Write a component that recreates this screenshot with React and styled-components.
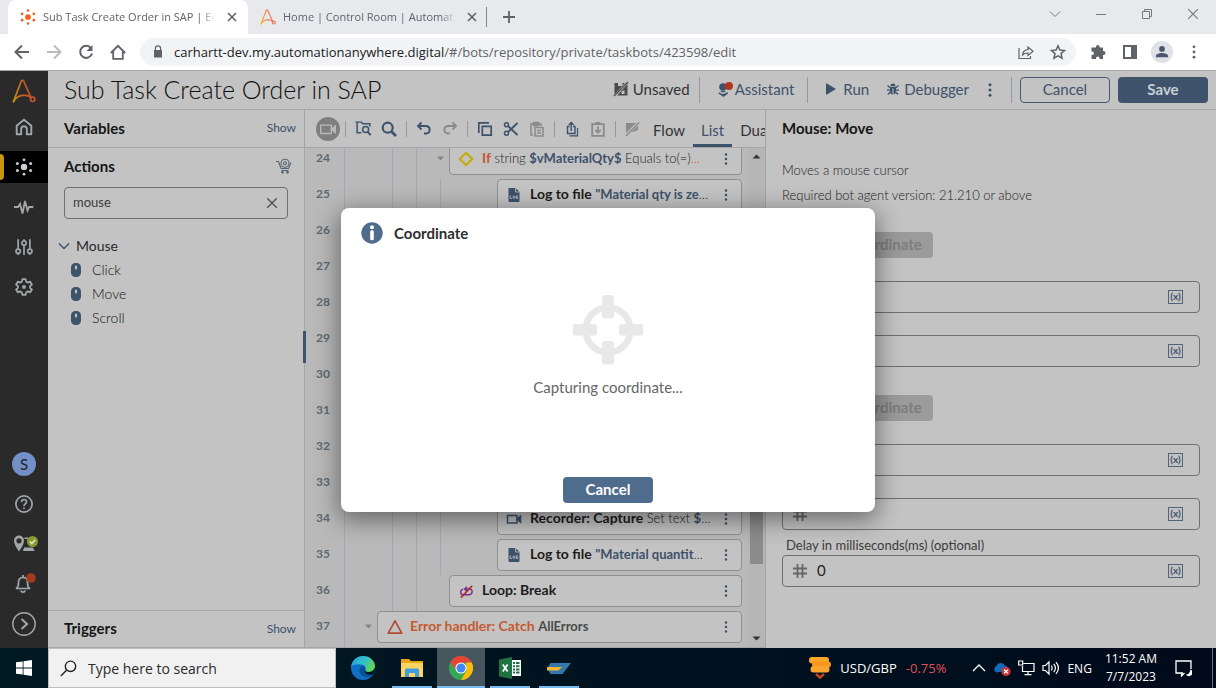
import React from "react";
import styled, { createGlobalStyle } from "styled-components";

const ui = '"Lato", "Open Sans", sans-serif';
const sys = '"Open Sans", "Noto Sans", sans-serif';

const c = {
  panel: "#c3c3c3",
  canvas: "#b9b9b9",
  line: "#a4a5a7",
  guide: "#a5a9af",
  blue: "#3d526b",
  ink: "#1c1c1c",
  off: "#8b8b8b",
  chrome: "#5f6368",
};

const GlobalStyle = createGlobalStyle`
  *, *::before, *::after { box-sizing: border-box; }
  html, body, #root { height: 100%; }
  body { margin: 0; overflow: hidden; font-family: ${ui}; font-size: 14px; color: ${c.ink}; }
  button, input { font: inherit; color: inherit; }
  button { padding: 0; border: 0; background: none; }
  h1, h2, p, ul, ol { margin: 0; padding: 0; font-weight: inherit; font-size: inherit; list-style: none; }
  a { color: inherit; text-decoration: none; }
  svg { display: block; flex: none; }
`;

const Screen = styled.div`
  display: flex;
  flex-direction: column;
  height: 100%;
`;

/* ---------- icons ---------- */

const Svg = ({ s = 16, vb = 16, w = 1.5, fill = "none", children }) => (
  <svg
    width={s}
    height={s}
    viewBox={`0 0 ${vb} ${vb}`}
    fill={fill}
    stroke={fill === "none" ? "currentColor" : "none"}
    strokeWidth={w}
    aria-hidden="true"
  >
    {children}
  </svg>
);

const Logo = ({ s = 24, id, from, to }) => (
  <svg width={s} height={s} viewBox="0 0 24 24" fill="none" aria-hidden="true">
    <defs>
      <linearGradient id={id} x1="0" y1="0" x2="24" y2="0" gradientUnits="userSpaceOnUse">
        <stop offset="0" stopColor={from} />
        <stop offset="0.5" stopColor={to} />
      </linearGradient>
    </defs>
    <g stroke={`url(#${id})`} strokeWidth="1.7" strokeLinecap="round">
      <path d="M1.5 22.5L9.3 2.2Q10.5 0 11.7 2.2L18.8 18.2" />
      <path d="M1.5 22.5Q5.5 16.3 12 16.2Q16.5 16.4 19 18.6" />
      <circle cx="20.7" cy="20.3" r="2.2" />
    </g>
  </svg>
);

const Hub = ({ s = 18 }) => (
  <Svg s={s} vb={18} fill="currentColor">
    <circle cx="9" cy="9" r="3.2" />
    <circle cx="9" cy="1.8" r="1.4" />
    <circle cx="9" cy="16.2" r="1.4" />
    <circle cx="2.4" cy="5.4" r="1.5" />
    <circle cx="15.6" cy="5.4" r="1.5" />
    <circle cx="2.4" cy="12.6" r="1.5" />
    <circle cx="15.6" cy="12.6" r="1.5" />
  </Svg>
);

const Cross = ({ s = 10, w = 1.5 }) => (
  <Svg s={s} vb={10} w={w}><path d="M1 1l8 8M9 1l-8 8" /></Svg>
);

const Dots = ({ s = 16, r = 1.4 }) => (
  <Svg s={s} fill="currentColor">
    <circle cx="8" cy="2.8" r={r} /><circle cx="8" cy="8" r={r} /><circle cx="8" cy="13.2" r={r} />
  </Svg>
);

const Caret = () => (
  <Svg s={9} vb={9} fill="currentColor"><path d="M1 2.5h7L4.5 6.5z" /></Svg>
);

const MouseIcon = () => (
  <svg width="10" height="14" viewBox="0 0 10 14" aria-hidden="true">
    <rect width="10" height="14" rx="4.5" fill={c.blue} />
    <rect x="4" y="2.5" width="2" height="4" rx="1" fill={c.panel} />
  </svg>
);

const FileLog = () => (
  <svg width="14" height="16" viewBox="0 0 14 16" aria-hidden="true">
    <path d="M2 1h6.5l4 4v9a1 1 0 0 1-1 1h-9a1 1 0 0 1-1-1V1.5z" fill={c.blue} />
    <path d="M8.5 1v4h4" fill="none" stroke={c.panel} strokeWidth=".8" />
    <path d="M3.2 8.5v3h1.6M10.9 8.9h-1.5v2.6h1.5v-1.2" fill="none" stroke={c.panel} strokeWidth=".9" />
    <circle cx="7" cy="10.2" r="1.1" fill="none" stroke={c.panel} strokeWidth=".9" />
  </svg>
);

const CameraIcon = ({ s = 16, w = 1.5 }) => (
  <Svg s={s} w={w}>
    <path d="M1.5 4.5h9.5v7.5H1.5z" />
    <path d="M11 8.2l3.5-3v6z" fill="currentColor" />
  </Svg>
);

const DiamondIcon = () => (
  <Svg w={2}><path d="M8 1.8L14.2 8 8 14.2 1.8 8z" /></Svg>
);

const LoopBreakIcon = () => (
  <Svg s={15} w={1.5}>
    <path d="M4.5 5.5C1 6 1 11.5 4.5 11.5h6c4.5-.3 4.5-6 1-6.2H7M8.5 3L6 5.3l2.5 2.4" />
    <path d="M2 14.5L14 2" stroke="#a9332f" strokeWidth="1.8" />
  </Svg>
);

const ErrorIcon = () => (
  <Svg s={18} w={1.5}><path d="M8 2.5L14 13.5H2z" strokeLinejoin="round" /></Svg>
);

const HashIcon = () => (
  <Svg s={14} vb={14} w={1.8}><path d="M4.5 0v14M9.5 0v14M0 4.5h14M0 9.5h14" /></Svg>
);

/* ---------- browser window ---------- */

const IconButton = styled.button`
  display: grid;
  place-items: center;
  flex: none;
  width: ${(p) => p.$w || 26}px;
  height: ${(p) => p.$h || 28}px;
  color: ${(p) => p.$color || "inherit"};
`;

const TabStrip = styled.div`
  display: flex;
  align-items: stretch;
  flex: none;
  height: 34px;
  padding-left: 8px;
  background: #e8e9ed;
  font-family: ${sys};
  font-size: 11px;
  color: ${c.chrome};
`;

const Tab = styled.div`
  display: flex;
  align-items: center;
  width: 240px;
  padding: 0 6px 0 12px;
  gap: 7px;
  border-radius: 8px 8px 0 0;
  background: ${(p) => (p.$active ? "#fff" : "transparent")};
`;

const TabTitle = styled.span`
  flex: 1;
  padding-bottom: 1px;
  overflow: hidden;
  white-space: nowrap;
  mask-image: linear-gradient(90deg, #000 92%, transparent);
`;

const Tint = styled.span`
  color: ${(p) => p.$color};
`;

const StripRule = styled.span`
  width: 1px;
  height: 20px;
  margin: 7px 9px 0 -2px;
  background: #85878b;
`;

const WindowControls = styled.div`
  display: flex;
  margin-left: auto;
  color: #77797c;
`;

const AddressBar = styled.div`
  display: flex;
  align-items: center;
  flex: none;
  height: 36px;
  padding: 0 6px;
  background: #fff;
  color: ${c.chrome};
`;

const UrlPill = styled.div`
  display: flex;
  align-items: center;
  flex: 1;
  height: 28px;
  margin: 0 6px;
  padding: 0 2px 0 10px;
  border-radius: 14px;
  background: #f1f3f4;
  font-family: ${sys};
  font-size: 13px;
`;

const UrlText = styled.span`
  flex: 1;
  padding-left: 8px;
  white-space: nowrap;
  b { font-weight: 400; color: #202124; }
`;

const ProfileDisc = styled.span`
  display: grid;
  place-items: center;
  width: 22px;
  height: 22px;
  border-radius: 50%;
  background: #dee1e6;
  color: #4a5670;
`;

function Browser() {
  return (
    <>
      <TabStrip>
        <Tab $active>
          <Tint $color="#ff5a1f"><Hub s={16} /></Tint>
          <TabTitle>Sub Task Create Order in SAP | Edit</TabTitle>
          <IconButton $w={20} aria-label="Close tab"><Cross w={1.6} /></IconButton>
        </Tab>
        <Tab>
          <Logo s={16} id="fav" from="#fdb515" to="#f0704c" />
          <TabTitle>Home | Control Room | Automation</TabTitle>
          <IconButton $w={20} aria-label="Close tab"><Cross w={1.6} /></IconButton>
        </Tab>
        <StripRule />
        <IconButton $h={34} aria-label="New tab"><Svg s={12} vb={12} w={1.8}><path d="M6 0v12M0 6h12" /></Svg></IconButton>
        <WindowControls>
          <IconButton $w={46} aria-label="Search tabs"><Svg s={12} vb={12} w={1}><path d="M1 3.5l5 5 5-5" /></Svg></IconButton>
          <IconButton $w={46} aria-label="Minimize"><Svg s={10} vb={10} w={1}><path d="M0 5.5h10" /></Svg></IconButton>
          <IconButton $w={46} aria-label="Restore"><Svg s={10} vb={10} w={1}><path d="M.5 2.5h7v7h-7zM2.5 2.5v-2h7v7h-2" /></Svg></IconButton>
          <IconButton $w={46} aria-label="Close"><Cross w={1} s={12} /></IconButton>
        </WindowControls>
      </TabStrip>
      <AddressBar>
        <IconButton $w={32} aria-label="Back"><Svg w={2}><path d="M15 8H2M8 1.5L1.5 8 8 14.5" /></Svg></IconButton>
        <IconButton $w={32} $color="#b9bbbe" aria-label="Forward"><Svg w={2}><path d="M1 8h13M8 1.5L14.5 8 8 14.5" /></Svg></IconButton>
        <IconButton $w={32} aria-label="Reload"><Svg w={2}><path d="M13 4.2A6 6 0 1 0 14 9.5" /><path d="M14.5 1v6h-6z" fill="currentColor" stroke="none" /></Svg></IconButton>
        <IconButton $w={32} aria-label="Home"><Svg w={1.8}><path d="M.8 9L8 1.8 15.2 9M3.2 7.5v7.3h9.6V7.5" /></Svg></IconButton>
        <UrlPill>
          <Svg fill="currentColor"><path fillRule="evenodd" d="M4 6h.8V4.5a3.2 3.2 0 0 1 6.4 0V6h.8v7.5H4zM6 6h4V4.5a2 2 0 0 0-4 0z" /></Svg>
          <UrlText><b>carhartt-dev.my.automationanywhere.digital</b>/#/bots/repository/private/taskbots/423598/edit</UrlText>
          <IconButton $w={32} aria-label="Share"><Svg w={1.2}><path d="M1 4v10.5h11.5V12" /><path d="M4.5 11C5 7.5 7 5.8 10 5.7V3l5 4.3-5 4.2V9C7.5 8.9 6 9.5 4.5 11z" /></Svg></IconButton>
          <IconButton $w={32} aria-label="Bookmark"><Svg><path d="M8 1.8l1.9 4.3 4.6.4-3.5 3.1 1.1 4.6L8 11.8l-4.1 2.4 1.1-4.6-3.5-3.1 4.6-.4z" /></Svg></IconButton>
        </UrlPill>
        <IconButton $w={32} aria-label="Extensions"><Svg fill="currentColor"><path d="M6 2.7a1.8 1.8 0 0 1 3.6 0V3.5H13v3.6h.6a1.9 1.9 0 0 1 0 3.8H13v4H9.5v-.8a1.7 1.7 0 0 0-3.4 0v.8H1.5v-4h.8a1.7 1.7 0 0 0 0-3.4h-.8v-4H6z" /></Svg></IconButton>
        <IconButton $w={32} aria-label="Side panel"><Svg w={2}><path d="M2 2h12v12H2z" /><path d="M9 2h5v12H9z" fill="currentColor" stroke="none" /></Svg></IconButton>
        <IconButton $w={32} aria-label="Profile"><ProfileDisc><Svg s={14} fill="currentColor"><circle cx="8" cy="4.5" r="3.3" /><path d="M1 14v-1.5C1 10 5 9 8 9s7 1 7 3.5V14z" /></Svg></ProfileDisc></IconButton>
        <IconButton $w={32} aria-label="Menu"><Dots /></IconButton>
      </AddressBar>
    </>
  );
}

/* ---------- control room ---------- */

const Workspace = styled.main`
  position: relative;
  display: flex;
  flex: 1;
  min-height: 0;
  border-top: 1px solid ${c.line};
  background: ${c.panel};
`;

const Rail = styled.nav`
  display: flex;
  flex-direction: column;
  flex: none;
  width: 48px;
  padding: 4px 0;
  background: #2a2a2a;
  color: #a3a6a8;
`;

const RailLink = styled.a`
  position: relative;
  display: grid;
  place-items: center;
  height: ${(p) => (p.$short ? 32 : 40)}px;
  margin: ${(p) => (p.$active ? "4px 0" : 0)};
  background: ${(p) => (p.$active ? "#000" : "none")};
  color: ${(p) => (p.$active ? "#c8cdd0" : "inherit")};
  &::before {
    content: "";
    display: ${(p) => (p.$active ? "block" : "none")};
    position: absolute;
    left: 0;
    top: 3px;
    bottom: 3px;
    width: 4px;
    border-radius: 0 4px 4px 0;
    background: #c8960c;
  }
`;

const RailSpacer = styled.span`
  flex: 1;
`;

const Avatar = styled.span`
  display: grid;
  place-items: center;
  width: 24px;
  height: 24px;
  padding-bottom: 1px;
  border-radius: 50%;
  background: #7490c8;
  font-size: 15px;
  color: #222;
`;

function RailNav() {
  return (
    <Rail aria-label="Main">
      <RailLink $short href="#home" aria-label="Home"><Logo id="mark" from="#c9990a" to="#c4552b" /></RailLink>
      <RailLink href="#overview" aria-label="Overview">
        <Svg s={18} w={1.7}><path d="M1.5 6.8L8 1.5l6.5 5.3v7.7h-4V9.8a2.5 2.5 0 0 0-5 0v4.7h-4z" strokeLinejoin="round" /></Svg>
      </RailLink>
      <RailLink $short $active href="#automation" aria-label="Automation"><Hub /></RailLink>
      <RailLink href="#activity" aria-label="Activity">
        <Svg s={20} vb={20} w={1.8}><path d="M0 10h4l2-3 2.5 9.5L11 4l2.5 9.5 1.5-3.5h3" /><circle cx="18.3" cy="10" r="1.2" fill="currentColor" stroke="none" /></Svg>
      </RailLink>
      <RailLink href="#manage" aria-label="Manage">
        <Svg s={18} w={1.5}><path d="M2.8 1v8.5M2.8 14.2V15M8 1v1.5M8 6.5V15M13.2 1v8.5M13.2 14.2V15" /><circle cx="2.8" cy="11.8" r="1.9" /><circle cx="8" cy="4.5" r="1.9" /><circle cx="13.2" cy="11.8" r="1.9" /></Svg>
      </RailLink>
      <RailLink href="#administration" aria-label="Administration">
        <Svg s={18} w={1.6}><path d="M6.6 1h2.8l.5 2.2 1.5.9 2.1-.8 1.5 2.5L13.4 7.2v1.6l1.6 1.4-1.5 2.5-2.1-.8-1.5.9L9.4 15H6.6l-.5-2.2-1.5-.9-2.1.8L1 10.2l1.6-1.4V7.2L1 5.8l1.5-2.5 2.1.8 1.5-.9z" strokeLinejoin="round" /><circle cx="8" cy="8" r="1.7" fill="currentColor" stroke="none" /></Svg>
      </RailLink>
      <RailSpacer />
      <RailLink href="#profile"><Avatar>S</Avatar></RailLink>
      <RailLink href="#help" aria-label="Help">
        <Svg s={18} w={1.5}><circle cx="8" cy="8" r="7.2" /><path d="M5.8 6.3c0-3 4.5-3 4.5-.2C10.3 7.8 8 7.8 8 9.8M8 11v1.5" /></Svg>
      </RailLink>
      <RailLink href="#journey" aria-label="Journey">
        <Svg s={28} vb={28} fill="currentColor">
          <path fillRule="evenodd" d="M9 5.5a5 5 0 0 1 5 5c0 3.5-2.5 7.5-5 11-2.5-3.5-5-7.5-5-11a5 5 0 0 1 5-5zm0 2.7a2.6 2.6 0 1 0 0 5.2 2.6 2.6 0 0 0 0-5.2z" />
          <path d="M14.5 7.5h4V9h-4zM14 17.5h9l1.5 3.5H13z" />
          <circle cx="22.5" cy="11.5" r="5.5" fill="#8a9a2f" />
          <path d="M19.8 11.5l2 2 3.5-3.8" fill="none" stroke="#dfe3cc" strokeWidth="1.6" />
        </Svg>
      </RailLink>
      <RailLink href="#alerts" aria-label="Alerts">
        <Svg s={26} vb={26} w={1.7}>
          <path d="M5.5 17.5c2-1.5 2-3 2-6 0-3 1.5-5 4.5-5s4.5 2 4.5 5c0 3 0 4.5 2 6z" strokeLinejoin="round" />
          <path d="M12 4v2.5M9.8 19.5a2.3 2.3 0 0 0 4.4 0" />
          <circle cx="20" cy="7" r="4.8" fill="#a33a20" stroke="none" />
        </Svg>
      </RailLink>
      <RailLink href="#expand" aria-label="Expand">
        <Svg s={24} vb={24} w={1.4}><circle cx="12" cy="12" r="11.2" /><path d="M9.5 7l5.5 5-5.5 5" strokeWidth="2" /></Svg>
      </RailLink>
    </Rail>
  );
}

const Editor = styled.div`
  display: flex;
  flex: 1;
  flex-direction: column;
  min-width: 0;
`;

const TitleBar = styled.header`
  display: flex;
  align-items: center;
  flex: none;
  height: 39px;
  padding: 0 8px 0 16px;
  border-bottom: 1px solid ${c.line};
`;

const BotName = styled.h1`
  flex: 1;
  padding-bottom: 2px;
  font-size: 25px;
  line-height: 28px;
  font-weight: 300;
  white-space: nowrap;
  color: #111;
`;

const HeaderAction = styled.button`
  display: flex;
  align-items: center;
  gap: ${(p) => p.$gap || 4}px;
  padding-bottom: 2px;
  font-size: 15px;
  color: ${(p) => p.$color || c.blue};
`;

const Rule = styled.span`
  flex: none;
  width: 1px;
  height: ${(p) => p.$h || 26}px;
  margin: 0 ${(p) => p.$r || 0}px 0 ${(p) => p.$l || 0}px;
  background: #98999b;
`;

const Button = styled.button`
  width: 90px;
  height: 26px;
  padding-bottom: 2px;
  border: 1px solid ${(p) => (p.$bg ? "transparent" : "#47596e")};
  border-radius: 4px;
  background: ${(p) => p.$bg || "transparent"};
  color: ${(p) => (p.$bg ? p.$color : c.blue)};
  font-size: 15px;
  line-height: 20px;
  font-weight: ${(p) => (p.$bg ? 700 : 400)};
`;

const HeaderButtons = styled.div`
  display: flex;
  gap: 8px;
`;

const MenuSlot = styled.span`
  margin: 0 13px;
`;

const RunGroup = styled.div`
  display: flex;
  gap: 18px;
`;

function Header() {
  return (
    <TitleBar>
      <BotName>Sub Task Create Order in SAP</BotName>
      <HeaderAction $color="#333">
        <Svg fill="#4a4a4a">
          <path d="M1.5 2H12L1.5 13.5z" /><path d="M14.5 3v11.5H4z" />
          <path d="M5 2h4.5v3H5zM8.5 10.5l3-1.5v4h-3z" fill={c.panel} />
          <path d="M1 15L15 1" stroke="#4a4a4a" strokeWidth="1.3" />
        </Svg>
        Unsaved
      </HeaderAction>
      <Rule $l={9} $r={18} />
      <HeaderAction $gap={2}>
        <Svg s={15} vb={15} fill="currentColor">
          <circle cx="5" cy="5" r="3.8" /><path d="M1.2 9h7.6L10 11.500 5.500 15 0.500 11.500z" />
          <path d="M1 9.5L5 11.5l4-2" fill="none" stroke={c.panel} />
          <circle cx="11" cy="4" r="4" fill="#b1361d" />
        </Svg>
        Assistant
      </HeaderAction>
      <Rule $l={13} $r={17} />
      <RunGroup>
        <HeaderAction $gap={6}>
          <Svg s={12} vb={12} fill="currentColor"><path d="M1 0l10 6-10 6z" /></Svg>
          Run
        </HeaderAction>
        <HeaderAction $gap={5}>
          <Svg s={12} vb={12} fill="currentColor"><path d="M3.5 3a2.5 2.5 0 0 1 5 0z" /><path d="M3 3.8h6V8c0 2-1 3.5-2.5 3.8V5.5h-1v6.3C4 11.5 3 10 3 8z" /><path d="M.5 2.5L3.5 5M11.5 2.5l-3 2.5M0 7.2h3M12 7.2H9M.8 11.5L3.5 9M11.2 11.5L8.5 9" fill="none" stroke="currentColor" strokeWidth="1.2" /></Svg>
          Debugger
        </HeaderAction>
      </RunGroup>
      <MenuSlot><IconButton $w={16} $color={c.blue} aria-label="More"><Dots r={1.5} /></IconButton></MenuSlot>
      <Rule $r={8} />
      <HeaderButtons>
        <Button>Cancel</Button>
        <Button $bg="#3f546c" $color="#c9ced4">Save</Button>
      </HeaderButtons>
    </TitleBar>
  );
}

const Columns = styled.div`
  display: flex;
  flex: 1;
  min-height: 0;
`;

const Sidebar = styled.aside`
  position: relative;
  display: flex;
  flex-direction: column;
  flex: none;
  width: 257px;
  border-right: 1px solid ${c.line};
  &::after {
    content: "";
    position: absolute;
    right: -2px;
    top: 221px;
    width: 3px;
    height: 32px;
    background: ${c.blue};
  }
`;

const PanelHead = styled.div`
  display: flex;
  align-items: center;
  justify-content: space-between;
  height: 38px;
  padding: 0 8px 2px 16px;
  border: 0 solid ${c.line};
  border-width: ${(p) => p.$border || "0"};
`;

const PanelTitle = styled.h2`
  font-size: 15px;
  line-height: 20px;
  font-weight: 700;
  color: #161616;
`;

const ShowButton = styled.button`
  font-size: 12px;
  color: ${c.blue};
`;

const CartSlot = styled.span`
  padding-right: 4px;
  color: #566373;
`;

const Grow = styled.span`
  flex: 1;
`;

const SearchBox = styled.div`
  display: flex;
  align-items: center;
  flex: none;
  height: 32px;
  margin: 1px 16px 0;
  padding: 0 2px 0 8px;
  border: 1px solid #707070;
  border-radius: 4px;
  color: #555;
  input {
    flex: 1;
    min-width: 0;
    padding: 0 0 2px;
    border: 0;
    outline: 0;
    background: none;
    font-size: 13px;
    color: #3a3a3a;
  }
`;

const TreeGroup = styled.button`
  display: flex;
  align-items: center;
  gap: 6px;
  height: 24px;
  margin: 15px 0 0 10px;
  padding-bottom: 1px;
  font-size: 14px;
  color: #2a2a2a;
  svg { color: ${c.blue}; }
`;

const TreeItem = styled.li`
  display: flex;
  align-items: center;
  gap: 11px;
  height: 24px;
  padding: 0 0 1px 23px;
  font-size: 14px;
  font-weight: 300;
  color: #111;
`;

function ActionsPanel() {
  return (
    <Sidebar>
      <PanelHead $border="0 0 1px">
        <PanelTitle>Variables</PanelTitle>
        <ShowButton>Show</ShowButton>
      </PanelHead>
      <PanelHead>
        <PanelTitle>Actions</PanelTitle>
        <CartSlot>
          <Svg w={1.1}>
            <path d="M0 3.5h2.5L5 10.5h7.5L15 4.5M5.5 12.5h7" />
            <circle cx="9" cy="5.2" r="4" /><circle cx="9" cy="5.2" r="1.5" />
            <circle cx="6.5" cy="14.3" r=".8" fill="currentColor" /><circle cx="11.5" cy="14.3" r=".8" fill="currentColor" />
          </Svg>
        </CartSlot>
      </PanelHead>
      <SearchBox>
        <input aria-label="Search actions" defaultValue="mouse" />
        <IconButton aria-label="Clear search"><Cross s={12} w={1.2} /></IconButton>
      </SearchBox>
      <TreeGroup><Svg s={12} vb={12} w={1.4}><path d="M1 3.5l5 5 5-5" /></Svg>Mouse</TreeGroup>
      <ul>
        {["Click", "Move", "Scroll"].map((name) => (
          <TreeItem key={name}><MouseIcon />{name}</TreeItem>
        ))}
      </ul>
      <Grow />
      <PanelHead $border="1px 0 1px">
        <PanelTitle>Triggers</PanelTitle>
        <ShowButton>Show</ShowButton>
      </PanelHead>
    </Sidebar>
  );
}

const Flow = styled.section`
  display: flex;
  flex: 1;
  flex-direction: column;
  min-width: 0;
  border-right: 1px solid ${c.line};
`;

const Toolbar = styled.div`
  display: flex;
  align-items: center;
  flex: none;
  height: 38px;
  padding-left: 11px;
  overflow: hidden;
  border-bottom: 1px solid ${c.line};
  color: ${c.blue};
`;

const RecordButton = styled.button`
  display: grid;
  place-items: center;
  flex: none;
  width: 24px;
  height: 24px;
  border-radius: 50%;
  background: #7f7f7f;
  color: #b9b9b9;
`;

const ViewTab = styled.button`
  flex: none;
  align-self: stretch;
  padding: 6px 8px 0;
  border-bottom: 3px solid ${(p) => (p.$active ? c.blue : "transparent")};
  font-size: 15px;
  color: ${(p) => (p.$active ? c.blue : "#333")};
`;

function FlowToolbar() {
  return (
    <Toolbar>
      <RecordButton aria-label="Record"><CameraIcon s={18} w={1.2} /></RecordButton>
      <Rule $l={5} $r={4} $h={16} />
      <IconButton aria-label="Find in files"><Svg s={17} w={1.4}><path d="M6 12H2V2h4l1.5 1.5H14V6M.5 2H2" /><circle cx="10" cy="9" r="2.8" /><path d="M12 11.3l2.800 3" strokeWidth="1.8" /></Svg></IconButton>
      <IconButton aria-label="Find"><Svg w={2.2}><circle cx="6.7" cy="6.7" r="5" /><path d="M10.4 10.4l4.6 4.6" strokeWidth="2.8" /></Svg></IconButton>
      <Rule $l={4} $r={4} $h={16} />
      <IconButton aria-label="Undo"><Svg w={1.8}><path d="M5.5 1.5L2 5l3.5 3.5M2 5h8.5a3.8 3.8 0 0 1 0 7.5H8" /></Svg></IconButton>
      <IconButton $color={c.off} aria-label="Redo"><Svg w={1.8}><path d="M10.5 1.5L14 5l-3.5 3.5M14 5H5.5a3.8 3.8 0 0 0 0 7.5H8" /></Svg></IconButton>
      <Rule $l={4} $r={4} $h={16} />
      <IconButton aria-label="Copy"><Svg w={1.7}><path d="M5.3 5.3h8.9v8.9H5.3z" /><path d="M1.8 12V1.8H12" /></Svg></IconButton>
      <IconButton aria-label="Cut"><Svg w={1.5}><circle cx="3.5" cy="3.8" r="2" /><circle cx="3.5" cy="12.2" r="2" /><path d="M5.2 5.2L14.5 14M5.2 10.8L14.5 2" strokeWidth="1.8" /></Svg></IconButton>
      <IconButton $color={c.off} aria-label="Paste"><Svg w={1.5}><path d="M4 14H2V3h10v2" /><path d="M4.5 1.5h5v3h-5z" fill="currentColor" /><path d="M6 6.5h8v8.5H6zM8 9.5h4M8 12h4" /></Svg></IconButton>
      <Rule $l={4} $r={4} $h={16} />
      <IconButton aria-label="Export"><Svg w={1.4}><path d="M5.5 5.5H3.5v7h7.5V5.5H9M7.2 10V1.8M4.7 4L7.2 1.5 9.7 4" /><path d="M13.5 7v7.8H5.5" strokeWidth="1.2" /></Svg></IconButton>
      <IconButton $color={c.off} aria-label="Import"><Svg w={1.8}><path d="M2.2 3.2h11.6v11.6H2.2z" /><path d="M5.5 1h5v3h-5z" fill="currentColor" stroke="none" /><path d="M8 5.5v6M5.3 9L8 11.8 10.7 9" /></Svg></IconButton>
      <Rule $l={4} $r={3} $h={16} />
      <IconButton $color={c.off} aria-label="Disable"><Svg fill="currentColor"><path d="M2 2h10L2 12zM14 4.5V9l-4 1.5-3 1z" /><path d="M2 15L15 1.5" stroke="currentColor" strokeWidth="1.5" /></Svg></IconButton>
      <ViewTab>Flow</ViewTab>
      <ViewTab $active>List</ViewTab>
      <ViewTab>Dual</ViewTab>
    </Toolbar>
  );
}

const ListArea = styled.div`
  display: flex;
  flex: 1;
  min-height: 0;
  overflow: hidden;
  border-bottom: 1px solid ${c.line};
  background: ${c.canvas};
`;

const Lines = styled.ol`
  display: flex;
  flex: 1;
  flex-direction: column;
  justify-content: flex-end;
  min-width: 0;
`;

const Line = styled.li`
  display: flex;
  flex: none;
  height: 36px;
`;

const LineNo = styled.span`
  width: 39px;
  padding-left: 11px;
  font-size: 12px;
  line-height: 29px;
  font-weight: 700;
  color: #5f6972;
`;

const Guide = styled.span`
  flex: none;
  width: ${(p) => p.$w}px;
  border-left: 1px solid ${c.guide};
`;

const CaretCell = styled.span`
  display: flex;
  justify-content: center;
  flex: none;
  width: 17px;
  padding-top: 11px;
  color: #7f868d;
`;

const Card = styled.div`
  display: flex;
  align-items: center;
  flex: 1;
  min-width: 0;
  height: 32px;
  margin-right: 6px;
  padding: 0 7px 0 8px;
  border: 1px solid #8f8f8f;
  border-radius: 4px;
  background: ${c.panel};
  color: ${(p) => p.$color || c.blue};
`;

const CardText = styled.span`
  flex: 1;
  min-width: 0;
  margin: 0 7px 0 8px;
  padding-bottom: 3px;
  overflow: hidden;
  white-space: nowrap;
  text-overflow: ellipsis;
  font-size: 13px;
  line-height: 20px;
  font-weight: 300;
  color: #222;
  strong { font-size: 14px; font-weight: 700; color: ${c.ink}; }
  em { font-style: normal; font-weight: 700; color: ${c.blue}; }
`;

const Keyword = styled.b`
  font-size: ${(p) => (p.$dark ? 13 : 14)}px;
  font-weight: 700;
  color: ${(p) => (p.$dark ? "#4a4a4a" : "#c55a30")};
`;

const IconCell = styled.span`
  display: grid;
  place-items: center;
  width: 16px;
`;

const ScrollTrack = styled.div`
  display: flex;
  flex-direction: column;
  align-items: center;
  justify-content: flex-end;
  flex: none;
  width: 17px;
  background: #b6b6b6;
  color: #333;
`;

const ScrollThumb = styled.span`
  width: 13px;
  height: 180px;
  margin-bottom: 66px;
  background: #8c8c8c;
`;

const ArrowBox = styled.span`
  display: grid;
  place-items: center;
  height: 17px;
`;

function Step({ icon, color, children }) {
  return (
    <Card $color={color}>
      <IconCell>{icon}</IconCell>
      <CardText>{children}</CardText>
      <IconButton $w={16} $color={c.blue} aria-label="Step menu"><Dots s={14} /></IconButton>
    </Card>
  );
}

const blankLines = [26, 27, 28, 29, 30, 31, 32, 33];
const Nested = () => (<><Guide $w={48} /><Guide $w={24} /><Guide $w={24} /><Guide $w={57} /></>);

function FlowList() {
  return (
    <ListArea>
      <Lines>
        <Line>
          <LineNo>24</LineNo><Guide $w={48} /><Guide $w={24} /><Guide $w={16} /><CaretCell><Caret /></CaretCell>
          <Step color="#c3ad00" icon={<DiamondIcon />}>
            <Keyword>If</Keyword> string <em>$vMaterialQty$</em> Equals to(=)<Tint $color="#c55a30">...</Tint>
          </Step>
        </Line>
        <Line>
          <LineNo>25</LineNo><Nested />
          <Step icon={<FileLog />}><strong>Log to file</strong> <em>"Material qty is zero"</em></Step>
        </Line>
        {blankLines.map((n) => (
          <Line key={n}><LineNo>{n}</LineNo><Nested /></Line>
        ))}
        <Line>
          <LineNo>34</LineNo><Nested />
          <Step icon={<CameraIcon />}><strong>Recorder: Capture</strong> Set text <em>$vQty$</em></Step>
        </Line>
        <Line>
          <LineNo>35</LineNo><Nested />
          <Step icon={<FileLog />}><strong>Log to file</strong> <em>"Material quantit</em>...</Step>
        </Line>
        <Line>
          <LineNo>36</LineNo><Guide $w={48} /><Guide $w={24} /><Guide $w={33} />
          <Step color="#7b2f8f" icon={<LoopBreakIcon />}><strong>Loop: Break</strong></Step>
        </Line>
        <Line>
          <LineNo>37</LineNo><Guide $w={16} /><CaretCell><Caret /></CaretCell>
          <Step color="#b34a35" icon={<ErrorIcon />}><Keyword>Error handler: Catch</Keyword> <Keyword $dark>AllErrors</Keyword></Step>
        </Line>
      </Lines>
      <ScrollTrack>
        <ArrowBox><Svg s={9} vb={9} fill="currentColor"><path d="M.5 6.5h8l-4-4z" /></Svg></ArrowBox>
        <Grow />
        <ScrollThumb />
        <ArrowBox><Svg s={9} vb={9} fill="currentColor"><path d="M.5 2.5h8l-4 4z" /></Svg></ArrowBox>
      </ScrollTrack>
    </ListArea>
  );
}

const Details = styled.aside`
  display: flex;
  flex-direction: column;
  flex: none;
  width: 450px;
  padding: 8px 16px 0;
`;

const Note = styled.p`
  font-size: 13px;
  line-height: 25px;
  font-weight: 300;
  color: #222;
`;

const Notes = styled.div`
  padding: 20px 0 24px;
`;

const CaptureButton = styled.button`
  flex: none;
  width: 151px;
  height: 26px;
  padding-bottom: 2px;
  border-radius: 4px;
  background: #9b9b9b;
  color: #7d7d7d;
  font-size: 15px;
  font-weight: 700;
`;

const Fields = styled.div`
  display: flex;
  flex-direction: column;
  gap: 22px;
  margin: 23px 0 ${(p) => (p.$last ? 0 : 28)}px;
`;

const FieldLabel = styled.label`
  padding: 8px 4px 2px;
  font-size: 13px;
  line-height: 15px;
  color: #3c3c3c;
`;

const FieldBox = styled.div`
  display: flex;
  align-items: center;
  flex: none;
  height: 32px;
  padding: 0 16px 0 10px;
  border: 1px solid #707070;
  border-radius: 4px;
  color: #666;
  input {
    flex: 1;
    min-width: 0;
    padding: 0 0 2px 10px;
    border: 0;
    outline: 0;
    background: none;
    font-size: 15px;
    color: #222;
  }
`;

const VariableButton = styled.button`
  width: 15px;
  height: 14px;
  padding-bottom: 2px;
  border: 1px solid #52647a;
  font-size: 10px;
  line-height: 10px;
  font-weight: 700;
  color: ${c.blue};
`;

const NumberField = ({ id, label, value }) => (
  <FieldBox>
    <HashIcon />
    <input id={id} aria-label={label} defaultValue={value} />
    <VariableButton aria-label="Insert variable">(x)</VariableButton>
  </FieldBox>
);

function DetailsPanel() {
  return (
    <Details>
      <PanelTitle>Mouse: Move</PanelTitle>
      <Notes>
        <Note>Moves a mouse cursor</Note>
        <Note>Required bot agent version: 21.210 or above</Note>
      </Notes>
      <CaptureButton>Capture coordinate</CaptureButton>
      <Fields>
        <NumberField label="Start X" />
        <NumberField label="Start Y" />
      </Fields>
      <CaptureButton>Capture coordinate</CaptureButton>
      <Fields $last>
        <NumberField label="End X" />
        <NumberField label="End Y" />
      </Fields>
      <FieldLabel htmlFor="delay">Delay in milliseconds(ms) (optional)</FieldLabel>
      <NumberField id="delay" value="0" />
    </Details>
  );
}

/* ---------- dialog ---------- */

const Overlay = styled.div`
  position: absolute;
  inset: 0;
  display: grid;
  place-items: center;
`;

const Dialog = styled.div`
  display: flex;
  flex-direction: column;
  align-items: center;
  width: 534px;
  height: 304px;
  padding: 14px 20px 9px;
  border-radius: 8px;
  background: #fff;
  box-shadow: 0 6px 24px 2px rgba(0, 0, 0, 0.45);
`;

const DialogTitle = styled.h2`
  display: flex;
  align-items: center;
  align-self: stretch;
  gap: 11px;
  font-size: 15px;
  line-height: 22px;
  font-weight: 700;
  color: #2e2e2e;
`;

const DialogBody = styled.div`
  display: flex;
  flex: 1;
  flex-direction: column;
  align-items: center;
  gap: 12px;
  padding-top: 51px;
  font-size: 15px;
  line-height: 20px;
  color: #666;
`;

function CoordinateDialog() {
  return (
    <Overlay>
      <Dialog role="dialog" aria-labelledby="dialog-title">
        <DialogTitle id="dialog-title">
          <Svg s={22} vb={22} fill="#4f6c8d">
            <circle cx="11" cy="11" r="10.7" />
            <circle cx="11" cy="5.2" r="2" fill="#fff" />
            <rect x="9.2" y="8.3" width="3.6" height="10" rx="1.5" fill="#fff" />
          </Svg>
          Coordinate
        </DialogTitle>
        <DialogBody>
          <Svg s={70} vb={70} fill="#e8e8e8">
            <circle cx="35" cy="35" r="22.5" fill="none" stroke="#e8e8e8" strokeWidth="6.5" />
            <rect x="29" y="0" width="12" height="23.5" rx="2.5" />
            <rect x="29" y="46" width="12" height="23.5" rx="2.5" />
            <rect x="0" y="29" width="24" height="11.5" rx="2.5" />
            <rect x="46" y="29" width="24" height="11.5" rx="2.5" />
          </Svg>
          <p>Capturing coordinate...</p>
        </DialogBody>
        <Button $bg="#4f6c8d" $color="#fff">Cancel</Button>
      </Dialog>
    </Overlay>
  );
}

/* ---------- taskbar ---------- */

const TaskbarRoot = styled.footer`
  display: flex;
  align-items: stretch;
  flex: none;
  height: 40px;
  background: linear-gradient(90deg, #001a22, #00111f 60%, #000a1a);
  font-family: ${sys};
  color: #fff;
`;

const TaskSearch = styled.label`
  display: flex;
  align-items: center;
  gap: 11px;
  width: 288px;
  padding-left: 11px;
  border: 1px solid #bdbdbd;
  background: #f1f1f1;
  color: #222;
  input {
    flex: 1;
    min-width: 0;
    padding: 0;
    border: 0;
    outline: 0;
    background: none;
    font-size: 14px;
  }
  input::placeholder { color: #2b2b2b; opacity: 1; }
`;

const Apps = styled.div`
  display: flex;
  gap: 1px;
  padding-left: 3px;
`;

const AppButton = styled.button`
  display: grid;
  place-items: center;
  width: 48px;
  background:
    linear-gradient(#76b9ed, #76b9ed) bottom / ${(p) => (p.$active ? "100%" : p.$open ? "40px" : "0")} 2px no-repeat,
    ${(p) => (p.$active ? "#47565e" : "transparent")};
`;

const Tray = styled.div`
  display: flex;
  align-items: center;
  margin-left: auto;
  font-size: 12px;
  padding-right: 3px;
`;

const Ticker = styled.a`
  display: flex;
  align-items: center;
  gap: 9px;
  margin-right: 26px;
  font-size: 13px;
  span { color: #e3505a; }
`;

const TrayIcons = styled.div`
  display: flex;
  align-items: center;
  gap: 7px;
  margin-right: 13px;
`;

const Clock = styled.time`
  margin-right: 18px;
  text-align: center;
  line-height: 18px;
`;

const PeekRule = styled.span`
  width: 1px;
  height: 40px;
  margin-left: 20px;
  background: #6b7480;
`;

function Taskbar() {
  return (
    <TaskbarRoot>
      <IconButton $w={48} $h={40} aria-label="Start">
        <Svg fill="#fff"><path d="M0 2.3L6.7 1.4V7.6H0zM7.5 1.3L16 0v7.6H7.5zM0 8.4h6.7v6.2L0 13.7zM7.5 8.4H16V16l-8.5-1.3z" /></Svg>
      </IconButton>
      <TaskSearch>
        <Svg s={17} vb={17} w={1.4}><circle cx="10.5" cy="6.3" r="5.2" /><path d="M6.5 10.3L.8 16" /></Svg>
        <input placeholder="Type here to search" aria-label="Type here to search" />
      </TaskSearch>
      <Apps>
        <AppButton aria-label="Edge">
          <svg width="24" height="24" viewBox="0 0 24 24">
            <defs>
              <linearGradient id="edge" x1="0" x2="1" y2=".4"><stop offset="0" stopColor="#1f9fe0" /><stop offset=".6" stopColor="#35c1c9" /><stop offset="1" stopColor="#5fd35a" /></linearGradient>
            </defs>
            <circle cx="12" cy="12" r="12" fill="#0f6fc5" />
            <path d="M0 11C1 4.5 6 0 12 0c7 0 12 5 12 10 0 4-3 6-6.5 6-2.5 0-3.5-1-3-2 .8-1.5.5-5-4-5.5C6 8 1.5 8.5 0 11z" fill="url(#edge)" />
            <path d="M8.5 14c0 5 5 8 9.5 7 2-.4 3.5-1.5 4.5-3-4 1.5-9 1-9-3.5 0-1 .5-1.5.5-2.5-1-3-5.5-2-5.5 2z" fill="#0b4f97" />
            <path d="M14.5 14c-.5 1 .5 2 3 2s5.5-1.5 6.3-4.5c.3 3-.8 5.5-2 7-4 1-8.3-.5-8.3-4z" fill="#001722" />
          </svg>
        </AppButton>
        <AppButton $open aria-label="File Explorer">
          <svg width="22" height="20" viewBox="0 0 22 20">
            <path d="M0 1h8l2 2h12v16H0z" fill="#e8a511" /><path d="M0 5h22v14H0z" fill="#fcd462" />
            <path d="M4 19v-7a1.5 1.5 0 0 1 1.5-1.5h11A1.5 1.5 0 0 1 18 12v7h-4v-4H8v4z" fill="#3f9bdc" />
          </svg>
        </AppButton>
        <AppButton $active aria-label="Chrome">
          <svg width="24" height="24" viewBox="0 0 24 24">
            <circle cx="12" cy="12" r="12" fill="#34a853" />
            <path d="M22.4 6A12 12 0 0 1 12 24l5.2-9V6z" fill="#fbbc05" />
            <path d="M12 6.5h10.6A12 12 0 0 0 1.6 6l5.6 9z" fill="#ea4335" />
            <circle cx="12" cy="12" r="5.6" fill="#fff" /><circle cx="12" cy="12" r="4.5" fill="#4285f4" />
          </svg>
        </AppButton>
        <AppButton $open aria-label="Excel">
          <svg width="22" height="22" viewBox="0 0 22 22">
            <path d="M12 3h10v16H12z" fill="#fff" />
            <path d="M14 5h2v2h-2zM17 5h3.5v2H17zM14 8.2h2v2h-2zM17 8.2h3.5v2H17zM14 11.4h2v2h-2zM17 11.4h3.5v2H17zM14 14.6h2v2h-2zM17 14.6h3.5v2H17z" fill="#1f7244" />
            <path d="M0 2.5L13 0v22L0 19.5z" fill="#1f7244" />
            <path d="M3.8 7.5l4.8 7M8.6 7.5l-4.8 7" stroke="#fff" strokeWidth="1.8" />
          </svg>
        </AppButton>
        <AppButton $open aria-label="SAP Logon">
          <svg width="24" height="13" viewBox="0 0 24 13">
            <path d="M3.5 1H24L15.500 12H3.500L1.500 8.500V4z" fill="#3577ad" />
            <path d="M0 5h15l-3.500 3.500H0z" fill="#f2b632" />
          </svg>
        </AppButton>
      </Apps>
      <Tray>
        <Ticker href="#rates">
          <svg width="22" height="24" viewBox="0 0 22 24">
            <rect x="0" y="1" width="20" height="6.5" rx="3" fill="#fba52c" />
            <rect x="3" y="5.5" width="19" height="6" rx="3" fill="#f6981f" />
            <rect x="1.5" y="10" width="19" height="6.5" rx="3" fill="#fba52c" />
            <path d="M7 18l4 3.5 4-3.5" stroke="#c2451c" strokeWidth="2.5" fill="none" />
          </svg>
          USD/GBP <span>-0.75%</span>
        </Ticker>
        <TrayIcons>
          <Svg s={14} vb={14} w={1.3}><path d="M1 10l6-6 6 6" /></Svg>
          <svg width="18" height="18" viewBox="0 0 18 18">
            <path d="M3.5 13.5a3.5 3.5 0 0 1 0-6.5c1-3.5 6.5-4 8-.5 3 0 4 3.5 3 5z" fill="#0f6cbd" />
            <circle cx="13" cy="12.5" r="4.6" fill="#d13438" /><path d="M11.2 10.7l3.6 3.6M14.8 10.7l-3.6 3.6" stroke="#fff" strokeWidth="1.3" />
          </svg>
          <Svg s={17} vb={17} w={1.2}><path d="M5.5 3.5H16v8H4.5V6M10 11.5v3M6.5 14.7h7M.7 1h4v4h-4z" /></Svg>
          <Svg s={18} vb={18} w={1.2}><path d="M1 6.5h2.5L7 3v12l-3.5-3.5H1zM9.3 6.5c1 1.5 1 3.5 0 5M11.7 4.8c2 2.5 2 6 0 8.4M14 3.2c3 3.5 3 8 0 11.6" /></Svg>
          ENG
        </TrayIcons>
        <Clock>11:52 AM<br />7/7/2023</Clock>
        <Svg s={17} vb={17} w={1.3}><path d="M8 13H1V1h15v8M6.5 13v3l3-3" /><path d="M15.5 9.5a3.5 3.5 0 1 1-4.5 5c2.5 0 4-2 4.5-5z" fill="currentColor" stroke="none" /></Svg>
        <PeekRule />
      </Tray>
    </TaskbarRoot>
  );
}

export default function App() {
  return (
    <Screen>
      <GlobalStyle />
      <Browser />
      <Workspace>
        <RailNav />
        <Editor>
          <Header />
          <Columns>
            <ActionsPanel />
            <Flow>
              <FlowToolbar />
              <FlowList />
            </Flow>
            <DetailsPanel />
          </Columns>
        </Editor>
        <CoordinateDialog />
      </Workspace>
      <Taskbar />
    </Screen>
  );
}
